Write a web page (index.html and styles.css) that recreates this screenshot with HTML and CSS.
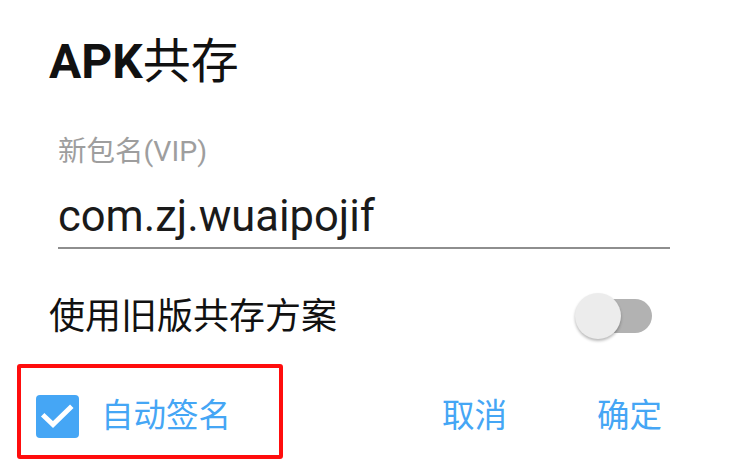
FILE: index.html
```html
<!DOCTYPE html>
<html lang="zh">
<head>
<meta charset="utf-8">
<title>APK共存</title>
<link rel="stylesheet" href="styles.css">
</head>
<body>
<div class="dialog">
  <h1 class="title"><span class="title-latin">APK</span><span class="title-cjk">共存</span></h1>
  <div class="field">
    <div class="field-label">新包名(VIP)</div>
    <div class="field-input">com.zj.wuaipojif</div>
  </div>
  <div class="switch-row">
    <span class="switch-label">使用旧版共存方案</span>
    <span class="switch"><span class="switch-track"></span><span class="switch-thumb"></span></span>
  </div>
  <div class="actions">
    <div class="checkbox">
      <span class="checkbox-box">
        <svg width="43" height="43" viewBox="0 0 43 43"><path d="M8.5 21.5 L17 29.5 L34 13" fill="none" stroke="#fff" stroke-width="5" stroke-linecap="square" stroke-linejoin="miter"/></svg>
      </span>
      <span class="checkbox-label">自动签名</span>
    </div>
    <div class="buttons">
      <span class="btn">取消</span>
      <span class="btn">确定</span>
    </div>
    <div class="highlight"></div>
  </div>
</div>
</body>
</html>
```

FILE: styles.css
```css
html, body {
  margin: 0;
  padding: 0;
  background: #ffffff;
}
body {
  font-family: Roboto, "Noto Sans CJK SC", sans-serif;
}
.dialog {
  width: 735px;
  height: 471px;
  overflow: hidden;
  position: relative;
}
.title {
  margin: 0;
  padding: 30px 0 0 49px;
  height: 64px;
  font-size: 48px;
  line-height: 64px;
  color: #111111;
  font-weight: 400;
}
.title-latin {
  font-weight: 700;
}
.title-cjk {
  font-weight: 400;
}
.field {
  margin: 42px 0 0 58px;
  width: 612px;
}
.field-label {
  font-size: 28.5px;
  line-height: 32px;
  height: 32px;
  color: #9e9e9e;
}
.field-input {
  margin-top: 24px;
  font-size: 43.5px;
  line-height: 50px;
  height: 50px;
  padding-bottom: 5px;
  color: #1a1a1a;
  border-bottom: 2px solid #8e8e8e;
}
.switch-row {
  margin-top: 37px;
  height: 60px;
  padding: 0 83px 0 49px;
  display: flex;
  align-items: center;
  justify-content: space-between;
}
.switch-label {
  font-size: 36px;
  line-height: 40px;
  color: #111111;
  padding-top: 2px;
}
.switch {
  position: relative;
  width: 78px;
  height: 48px;
}
.switch-track {
  position: absolute;
  left: 12px;
  right: 0;
  top: 7px;
  height: 34px;
  border-radius: 17px;
  background: #b2b2b2;
}
.switch-thumb {
  position: absolute;
  left: 1px;
  top: 1px;
  width: 46px;
  height: 46px;
  border-radius: 50%;
  background: #ececec;
  box-shadow: 0 2px 3px rgba(0, 0, 0, 0.28);
}
.actions {
  margin-top: 40px;
  height: 60px;
  padding: 0 73px 0 36px;
  display: flex;
  align-items: center;
  position: relative;
}
.checkbox {
  display: flex;
  align-items: center;
  gap: 22px;
}
.checkbox-box {
  width: 43px;
  height: 43px;
  border-radius: 4px;
  background: #45a6f5;
  display: flex;
}
.checkbox-label {
  font-size: 32.5px;
  line-height: 40px;
  color: #45a6f5;
}
.buttons {
  margin-left: auto;
  display: flex;
  gap: 90px;
}
.btn {
  font-size: 32.5px;
  line-height: 40px;
  color: #45a6f5;
}
.highlight {
  position: absolute;
  left: 17px;
  top: -22px;
  width: 258px;
  height: 87px;
  border: 4px solid #ff0d0d;
  border-radius: 3px;
}
```
